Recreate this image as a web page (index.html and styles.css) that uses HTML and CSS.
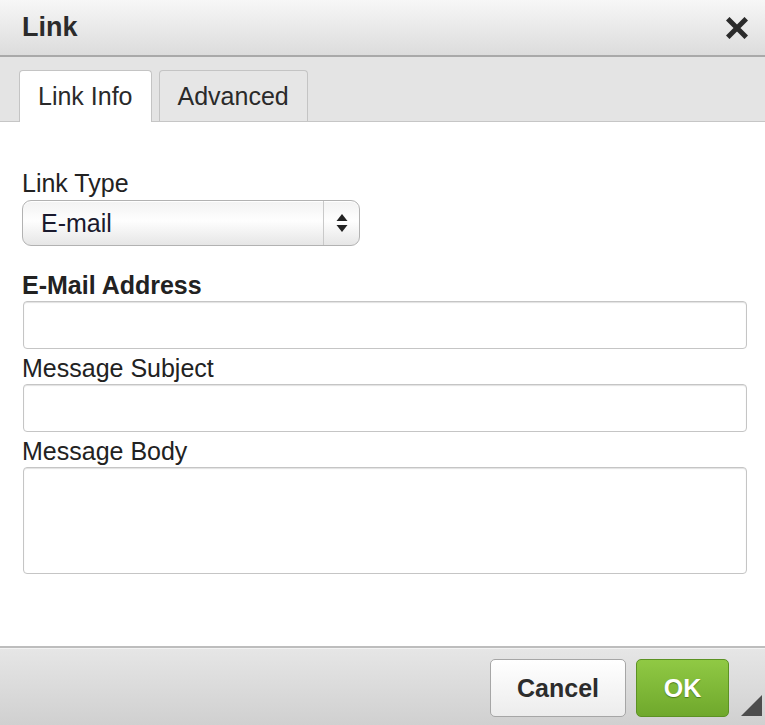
FILE: index.html
```html
<!DOCTYPE html>
<html lang="en">
<head>
    <meta charset="UTF-8">
    <title>Link</title>
    <link rel="stylesheet" href="styles.css">
</head>
<body>
    <div class="dialog">
        <div class="titlebar">
            <span class="title">Link</span>
            <a class="close" title="Close">
                <svg width="22" height="22" viewBox="0 0 22 22">
                    <path d="M3.5 3.5 L18.5 18.5 M18.5 3.5 L3.5 18.5" stroke="#2b2b2b" stroke-width="5" stroke-linecap="square"/>
                </svg>
            </a>
        </div>

        <div class="tabs">
            <div class="tab active">Link Info</div>
            <div class="tab">Advanced</div>
        </div>

        <div class="content">
            <label class="field-label">Link Type</label>
            <div class="select">
                <span class="select-value">E-mail</span>
                <span class="select-arrows">
                    <svg width="12" height="22" viewBox="0 0 12 22">
                        <path d="M6 2 L11.5 9 L0.5 9 Z" fill="#222"/>
                        <path d="M0.5 13 L11.5 13 L6 20 Z" fill="#222"/>
                    </svg>
                </span>
            </div>

            <label class="field-label strong">E-Mail Address</label>
            <input class="text-input" type="text">

            <label class="field-label">Message Subject</label>
            <input class="text-input" type="text">

            <label class="field-label">Message Body</label>
            <textarea class="text-area"></textarea>
        </div>

        <div class="footer">
            <button class="btn">Cancel</button>
            <button class="btn ok">OK</button>
            <span class="resize"></span>
        </div>
    </div>
</body>
</html>
```

FILE: styles.css
```css
body {
    margin: 0;
    font-family: "Liberation Sans", Arial, sans-serif;
    background-color: #fff;
    color: #222;
}
.dialog {
    width: 765px;
    height: 725px;
    display: flex;
    flex-direction: column;
    background-color: #fff;
}
.titlebar {
    height: 55px;
    display: flex;
    align-items: center;
    justify-content: space-between;
    padding: 0 17px 0 22px;
    background: linear-gradient(#f7f7f7, #dcdcdc);
    border-bottom: 2px solid #a9a9a9;
}
.title {
    font-size: 27px;
    font-weight: bold;
    color: #2b2b2b;
}
.close {
    display: flex;
    cursor: pointer;
}
.tabs {
    height: 64px;
    display: flex;
    align-items: flex-end;
    gap: 7px;
    padding-left: 19px;
    background-color: #e4e4e4;
    border-bottom: 1px solid #c6c6c6;
}
.tab {
    height: 50px;
    padding: 0 18px;
    display: flex;
    align-items: center;
    font-size: 25px;
    color: #2a2a2a;
    background-color: #e6e6e6;
    border: 1px solid #c4c4c4;
    border-bottom: none;
    border-radius: 4px 4px 0 0;
    cursor: pointer;
}
.tab.active {
    background-color: #fff;
    height: 51px;
    margin-bottom: -1px;
}
.content {
    flex: 1;
    display: flex;
    flex-direction: column;
    align-items: flex-start;
    padding: 47px 19px 0 22px;
}
.field-label {
    font-size: 25px;
    line-height: 28px;
    color: #222;
}
.field-label.strong {
    font-weight: bold;
    margin-top: 25px;
}
.select {
    width: 336px;
    height: 44px;
    margin-top: 3px;
    display: flex;
    align-items: stretch;
    border: 1px solid #b2b2b2;
    border-radius: 9px;
    background: linear-gradient(#f2f2f2, #fefefe 45%, #e6e6e6);
    box-shadow: inset 0 1px 1px #fff;
}
.select-value {
    flex: 1;
    display: flex;
    align-items: center;
    padding-left: 18px;
    font-size: 25px;
    color: #1a1a2e;
    border-right: 1px solid #c9c9c9;
}
.select-arrows {
    width: 35px;
    display: flex;
    align-items: center;
    justify-content: center;
}
.text-input,
.text-area {
    box-sizing: border-box;
    width: 724px;
    margin: 2px 0 5px 1px;
    border: 1px solid #c5c5c5;
    border-radius: 4px;
    background-color: #fff;
    box-shadow: inset 0 1px 1px #e2e2e2;
    font-family: inherit;
    font-size: 22px;
    padding: 0 8px;
}
.text-input {
    height: 48px;
}
.text-area {
    height: 107px;
    resize: none;
}
.footer {
    height: 77px;
    display: flex;
    align-items: flex-start;
    justify-content: flex-end;
    gap: 10px;
    padding-right: 36px;
    position: relative;
    background: linear-gradient(#e6e6e6, #d0d0d0);
    border-top: 2px solid #bdbdbd;
    box-shadow: inset 0 1px 0 #f2f2f2;
}
.btn {
    margin-top: 11px;
    height: 58px;
    font-family: inherit;
    font-size: 25px;
    font-weight: bold;
    color: #2c2c2c;
    border: 1px solid #a6a6a6;
    border-radius: 5px;
    background: linear-gradient(#ffffff, #ececec);
    cursor: pointer;
}
.btn:first-child {
    width: 136px;
}
.btn.ok {
    width: 93px;
    color: #fff;
    border-color: #5c9223;
    background: linear-gradient(#90c944, #6fa82c);
    text-shadow: 0 1px 1px #4d7a1c;
}
.resize {
    position: absolute;
    right: 3px;
    bottom: 9px;
    width: 0;
    height: 0;
    border-left: 21px solid transparent;
    border-bottom: 21px solid #4d4d4d;
}
```
